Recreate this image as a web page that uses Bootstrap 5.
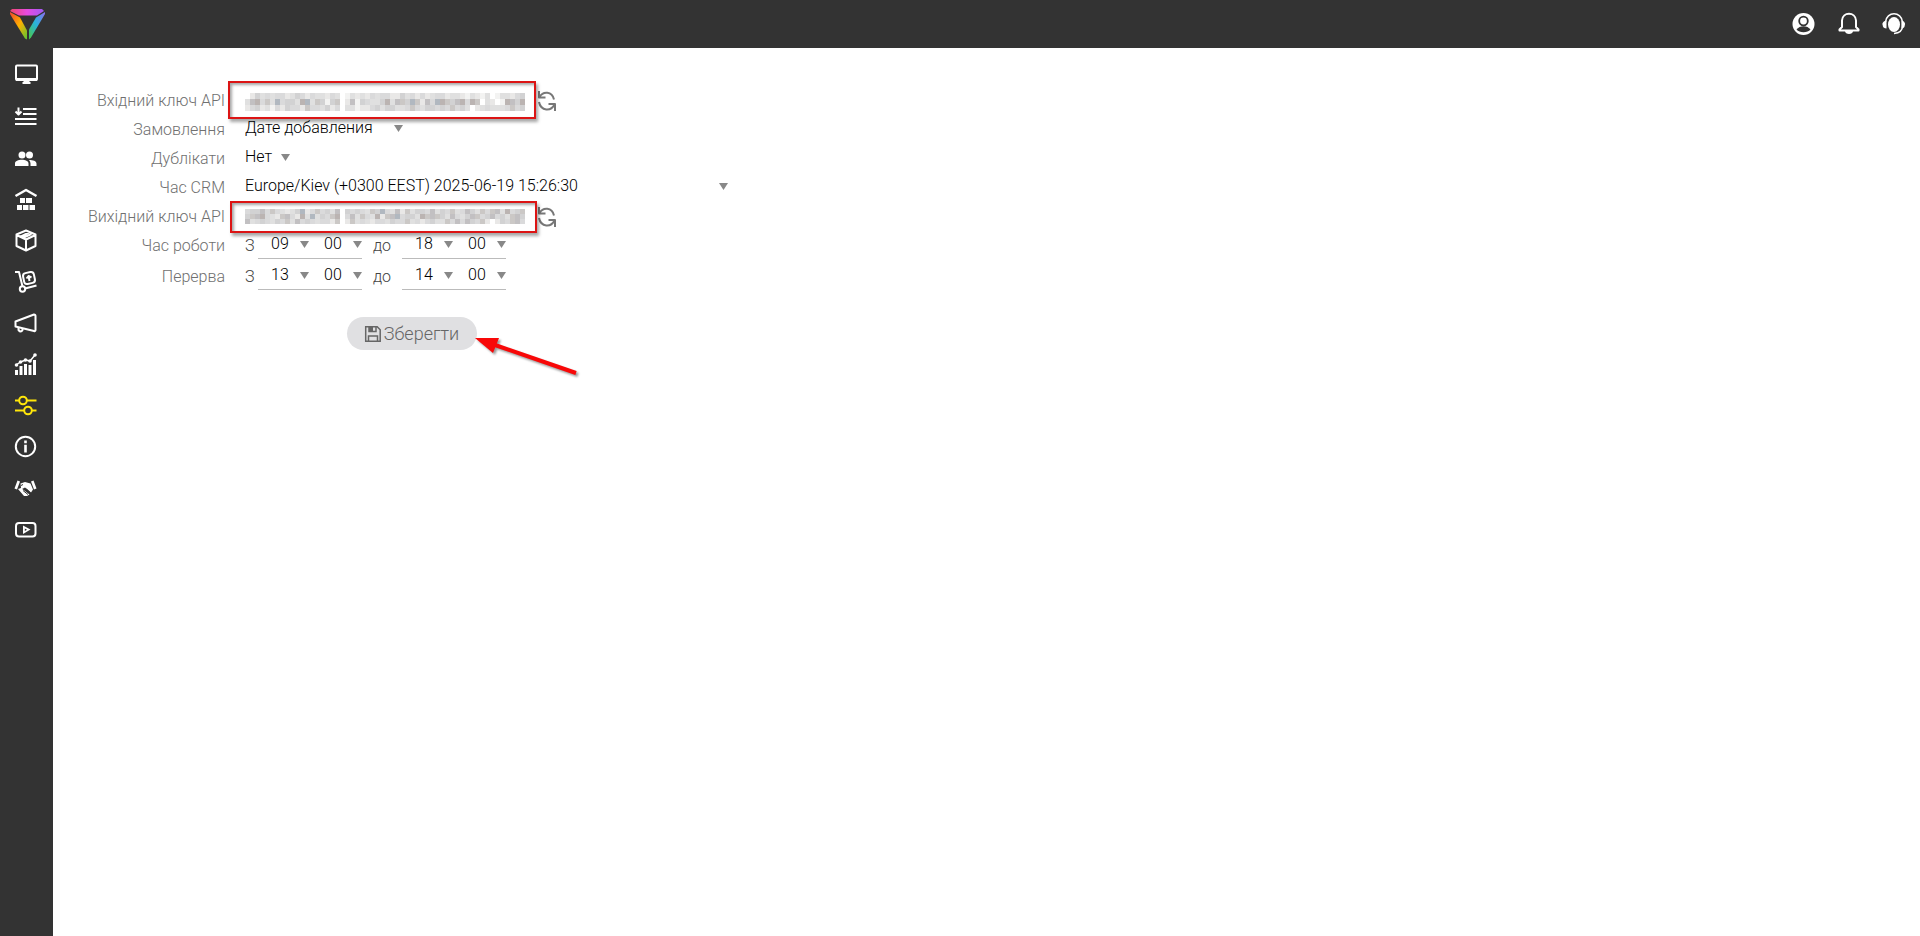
<!DOCTYPE html>
<html lang="uk">
<head>
<meta charset="utf-8">
<meta name="viewport" content="width=device-width, initial-scale=1">
<title>CRM</title>
<link href="https://cdn.jsdelivr.net/npm/bootstrap@5.3.0/dist/css/bootstrap.min.css" rel="stylesheet">
<style>
  body { font-family: Roboto, "Liberation Sans", sans-serif; font-weight: 300; font-size: 16px; line-height: 24px; color: #000; background: #fff; }
  svg { display: block; overflow: visible; }
  .topbar { background: #333; height: 48px; padding: 0 14px 0 8px; }
  .tools { gap: 21px; }
  .side { background: #333; width: 53px; flex: none; padding-top: 6px; }
  .side a { height: 41px; padding-right: 1px; color: #fff; }
  .side li:nth-child(3n+2) a { height: 42px; }
  .side a.active { color: #ffe60a; }
  .tool { color: #fff; }
  .ln { fill: none; stroke: currentColor; stroke-width: 2; stroke-linejoin: round; }
  .fl { fill: currentColor; }
  .settings { padding-top: 38px; }
  .line { height: 29px; gap: 20px; }
  .line > .title { width: 172px; flex: none; text-align: right; color: #707070; }
  .pick { appearance: none; border: 0; border-radius: 0; padding: 0 0 4px; color: #000; font-weight: 300; line-height: 24px; height: 28px;
    background: transparent url("data:image/svg+xml,%3Csvg xmlns='http://www.w3.org/2000/svg' width='9' height='7'%3E%3Cpath d='M0 0h9L4.5 7z' fill='%23888'/%3E%3C/svg%3E") no-repeat right 2px top 9px; }
  .pick-order { width: 160px; }
  .pick-dup { width: 47px; }
  .pick-zone { width: 485px; }
  .hours { border-bottom: 1px solid #bbb; }
  .hours .pick { width: 53px; padding-left: 13px; height: 26px; padding-bottom: 2px; }
  .hours .pick + .pick { width: 51px; background-position: right 0 top 9px; }
  .pause { margin-top: 2px; }
  .word { color: #444; }
  .from { width: 13px; }
  .till { width: 40px; text-align: center; }
  .keybox { width: 293px; }
  .keybox input { width: 100%; border: 0; background: transparent; outline: 0; height: 24px; padding: 0; }
  .cover { position: absolute; left: 0; top: 4px; }
  .mark-red { position: absolute; left: -17px; top: -8px; width: 308px; height: 38px; border: 2px solid #dc1414; box-shadow: 2px 3px 3px rgba(0,0,0,.35), inset 2px 2px 3px rgba(0,0,0,.35); }
  .mark-red.slim { left: -15px; top: -4px; width: 307px; height: 32px; }
  .renew { border: 0; background: none; padding: 0; color: #777; margin-left: -20px; }
  .save { width: 130px; height: 33px; margin: 26px 0 0 294px; border: 0; border-radius: 17px; background: #e0e0e2; color: #666; font-size: 18px; font-weight: 300; gap: 3px; }
  .pointer { position: absolute; left: 128px; top: 18px; filter: drop-shadow(2px 2px 1px rgba(0,0,0,.4)); }
</style>
</head>
<body class="d-flex flex-column min-vh-100">
<header class="topbar d-flex align-items-center justify-content-between">
  <a href="#" aria-label="CRM">
    <svg width="36" height="36" viewBox="0 0 36 36">
      <defs>
        <linearGradient id="ga"><stop offset="0" stop-color="#f0466e"/><stop offset=".5" stop-color="#e84be0"/><stop offset="1" stop-color="#a05af5"/></linearGradient>
        <linearGradient id="gb" x2="1" y2="1"><stop offset="0" stop-color="#f0442c"/><stop offset=".5" stop-color="#ffb000"/><stop offset="1" stop-color="#58c832"/></linearGradient>
        <linearGradient id="gc" x1="1" x2="0" y2="1"><stop offset="0" stop-color="#8c6cf0"/><stop offset=".5" stop-color="#28b4dc"/><stop offset="1" stop-color="#4cc840"/></linearGradient>
      </defs>
      <path d="M4 3h30l2 2-7 4.500H11L2 5z" fill="url(#ga)"/>
      <path d="M2 6l10 5.500 7 13v9l-2-1L2 8z" fill="url(#gb)"/>
      <path d="M37 6l-9 5.500-7 12v10l2-2L37 8z" fill="url(#gc)"/>
    </svg>
  </a>
  <nav class="tools d-flex">
    <a class="tool" href="#" aria-label="Профіль"><svg width="24" height="24" viewBox="0 0 24 24"><circle class="fl" cx="11.500" cy="12" r="11"/><circle cx="11.500" cy="9" r="4.300" fill="none" stroke="#333" stroke-width="1.800"/><path d="M4.500 17.500c3-4.500 11-4.500 14 0-3 3.500-11 3.500-14 0z" fill="#333"/></svg></a>
    <a class="tool" href="#" aria-label="Сповіщення"><svg width="24" height="24" viewBox="0 0 24 24"><path class="ln" d="M2.500 18.500v-1l2.500-2.500V8.500C5.500-.5 18.500-.5 19 8.500V15l2.500 2.500v1z"/><path class="fl" d="M8 19h8c0 4-8 4-8 0z"/></svg></a>
    <a class="tool" href="#" aria-label="Підтримка"><svg width="24" height="24" viewBox="0 0 24 24"><ellipse class="fl" cx="12" cy="12.500" rx="6" ry="7.500"/><path d="M3.500 10C4.500-1 19.500-1 20.500 10v4c0 4-3 7-8.500 7.500" class="ln" style="stroke-width:1.500px"/><path class="fl" d="M4.500 8.500v8C0 16 1 13 .5 12.500S1 9 4.500 8.500zM19.500 8.500v8c4-.500 3-3.500 3.500-4s-.5-3.500-3.500-4z"/></svg></a>
  </nav>
</header>
<div class="d-flex flex-grow-1">
  <nav class="side">
    <ul class="list-unstyled m-0">
      <li><a class="d-flex align-items-center justify-content-center" href="#" aria-label="Робочий стіл"><svg width="24" height="24" viewBox="0 0 24 24"><rect class="ln" x="2" y="2.500" width="21" height="14.500" rx="1"/><path class="fl" d="M2 15h21v3H2zM9.500 17h6v2h1v2h-8v-2h1z"/></svg></a></li>
      <li><a class="d-flex align-items-center justify-content-center" href="#" aria-label="Замовлення"><svg width="24" height="24" viewBox="0 0 24 24"><path class="ln" d="M9 5h13.500M9 10h13.500M1 15h21.500M1 20h21.500M4.500 3.500v6M1.500 7.500l3 3 3-3"/></svg></a></li>
      <li><a class="d-flex align-items-center justify-content-center" href="#" aria-label="Клієнти"><svg width="24" height="24" viewBox="0 0 24 24"><circle class="fl" cx="8" cy="9" r="3.500"/><circle class="fl" cx="15.500" cy="9" r="3.500"/><path class="fl" d="M1 20v-2.500c0-5 13.500-5 13.500 0V20zM15 14c4 0 7.500 1 7.500 3.500V20H16.500v-2.500q0-2-1.500-3.500z"/></svg></a></li>
      <li><a class="d-flex align-items-center justify-content-center" href="#" aria-label="Склад"><svg width="24" height="24" viewBox="0 0 24 24"><path class="ln" d="M1.500 9L12 3l10.500 6" style="stroke-width:2.500px"/><path class="fl" d="M6 11h5v5H6zM12 11h6v5h-6zM3 18h5v5H3zM9 18h5.500v5H9zM15.500 18H21v5h-5.500z"/></svg></a></li>
      <li><a class="d-flex align-items-center justify-content-center" href="#" aria-label="Товари"><svg width="24" height="24" viewBox="0 0 24 24"><path class="ln" d="M12 2.500l9.500 4V18L12 22.500 2.500 18V6.500zM2.500 7l9.500 4.500L21.500 7M12 11.500v11M6 9l9-4.500M8.500 10l9-4"/></svg></a></li>
      <li><a class="d-flex align-items-center justify-content-center" href="#" aria-label="Доставка"><svg width="24" height="24" viewBox="0 0 24 24"><path class="ln" d="M1 2h4l3.500 14.500M11 18.500l11.500-3"/><circle class="ln" cx="8.500" cy="19" r="2.700"/><rect class="ln" x="9.500" y="2.500" width="11" height="11" rx="3" transform="rotate(-12 15 8)"/><path class="ln" d="M15.500 11l-.8-4M12.500 8.500l2-2.500 3 1.500"/></svg></a></li>
      <li><a class="d-flex align-items-center justify-content-center" href="#" aria-label="Маркетинг"><svg width="24" height="24" viewBox="0 0 24 24"><path class="ln" d="M1.500 10.500L20 3.500q1.500 0 1.500 1.500v14q0 1.500-1.500 1L1.500 15.500z"/><path class="ln" d="M4.500 16v3q2.500 3 4 0v-2"/></svg></a></li>
      <li><a class="d-flex align-items-center justify-content-center" href="#" aria-label="Статистика"><svg width="24" height="24" viewBox="0 0 24 24"><path class="fl" d="M1 18h3v5H1zM5.500 14h3v9h-3zM10 12h3v11h-3zM14.500 13h3v10h-3zM19 8h3v15h-3z"/><path class="ln" d="M2 13l4.500-3 5-2 4.500 1 5-6" style="stroke-width:1.500px"/><circle class="fl" cx="2.500" cy="13" r="1.800"/><circle class="fl" cx="6.500" cy="10" r="1.800"/><circle class="fl" cx="11.500" cy="8" r="1.800"/><circle class="fl" cx="16" cy="9" r="1.800"/><circle class="fl" cx="21" cy="3" r="1.800"/></svg></a></li>
      <li><a class="active d-flex align-items-center justify-content-center" href="#" aria-label="Налаштування" aria-current="page"><svg width="24" height="24" viewBox="0 0 24 24"><path class="ln" d="M1 6.500h4M13 6.500h9.500M1 16.500h9M18 16.500h4.500"/><circle class="ln" cx="9" cy="6.500" r="3.800"/><circle class="ln" cx="14" cy="16.500" r="3.800"/></svg></a></li>
      <li><a class="d-flex align-items-center justify-content-center" href="#" aria-label="Інформація"><svg width="24" height="24" viewBox="0 0 24 24"><circle class="ln" cx="11.500" cy="11.500" r="9.700"/><path class="fl" d="M10.200 5.500h2.600v2.800h-2.600zM10.200 9.800h2.600v7.700h-2.600z"/></svg></a></li>
      <li><a class="d-flex align-items-center justify-content-center" href="#" aria-label="Партнери"><svg width="24" height="24" viewBox="0 0 24 24"><path class="fl" d="M3.500 4.500l2.500 1-3 8-2.500-1zM19.500 4.500L17 5.500l3 8 2.500-1zM6.500 7.500L11 6l5.500 1.500 2.500 6-2 3-6-5-3 1.500-1-1zM4 13l3-1 8.500 6.500L13 20H10z"/><path d="M9 14.500l5 4M12 12.500l4 4M7 9.500l2-1" stroke="#333"/></svg></a></li>
      <li><a class="d-flex align-items-center justify-content-center" href="#" aria-label="Відео"><svg width="24" height="24" viewBox="0 0 24 24"><rect class="ln" x="2" y="5" width="19.500" height="13.500" rx="3"/><path class="fl" d="M9 7.500l7.500 4L9 16z"/><path d="M10.800 10.500l2.200 1.200-2.200 1.300z" fill="#333"/></svg></a></li>
    </ul>
  </nav>
  <main class="settings flex-grow-1">
    <form>
      <div class="line d-flex align-items-center">
        <label class="title" for="keyIn">Вхідний ключ API</label>
        <div class="keybox position-relative"><input id="keyIn" type="password" readonly><svg class="cover" width="280" height="17" data-mosaic="in" aria-hidden="true"></svg><span class="mark-red"></span></div>
        <button class="renew" type="button" aria-label="Оновити"><svg width="18" height="20" viewBox="0 0 18 20"><path class="ln" d="M1 0v6.500h6.500M1.500 6C5 0 14 0 16 8.500M17 20v-7h-6.500M16.500 13.500C13 20.500 3 20.500 1 11"/></svg></button>
      </div>
      <div class="line d-flex align-items-center">
        <label class="title" for="order">Замовлення</label>
        <select id="order" class="pick pick-order"><option>Дате добавления</option></select>
      </div>
      <div class="line d-flex align-items-center">
        <label class="title" for="dup">Дублікати</label>
        <select id="dup" class="pick pick-dup"><option>Нет</option></select>
      </div>
      <div class="line d-flex align-items-center">
        <label class="title" for="zone">Час CRM</label>
        <select id="zone" class="pick pick-zone"><option>Europe/Kiev (+0300 EEST) 2025-06-19 15:26:30</option></select>
      </div>
      <div class="line d-flex align-items-center">
        <label class="title" for="keyOut">Вихідний ключ API</label>
        <div class="keybox position-relative"><input id="keyOut" type="password" readonly><svg class="cover" width="280" height="15" data-mosaic="out" aria-hidden="true"></svg><span class="mark-red slim"></span></div>
        <button class="renew" type="button" aria-label="Оновити"><svg width="18" height="20" viewBox="0 0 18 20"><path class="ln" d="M1 0v6.500h6.500M1.500 6C5 0 14 0 16 8.500M17 20v-7h-6.500M16.500 13.500C13 20.500 3 20.500 1 11"/></svg></button>
      </div>
      <div class="line d-flex align-items-center">
        <label class="title" for="w1">Час роботи</label>
        <div class="d-flex align-items-center">
          <span class="word from">З</span>
          <div class="hours d-flex"><select id="w1" class="pick"><option>09</option></select><select class="pick" aria-label="Хвилини"><option>00</option></select></div>
          <span class="word till">до</span>
          <div class="hours d-flex"><select class="pick" aria-label="Години"><option>18</option></select><select class="pick" aria-label="Хвилини"><option>00</option></select></div>
        </div>
      </div>
      <div class="line pause d-flex align-items-center">
        <label class="title" for="b1">Перерва</label>
        <div class="d-flex align-items-center">
          <span class="word from">З</span>
          <div class="hours d-flex"><select id="b1" class="pick"><option>13</option></select><select class="pick" aria-label="Хвилини"><option>00</option></select></div>
          <span class="word till">до</span>
          <div class="hours d-flex"><select class="pick" aria-label="Години"><option>14</option></select><select class="pick" aria-label="Хвилини"><option>00</option></select></div>
        </div>
      </div>
      <button class="save position-relative d-flex align-items-center justify-content-center" type="submit">
        <svg width="16" height="16" viewBox="0 0 16 16"><path d="M.7.700h11.500l3 3v11.500H.7zM3.500 15v-5h9v5M4 1v4.500h7V1" fill="none" stroke="currentColor" stroke-width="1.500"/><path class="fl" d="M4 1h4v4H4z"/></svg>
        Зберегти
        <svg class="pointer" width="104" height="42" viewBox="0 0 104 42" aria-hidden="true"><path d="M20 10L101 38" stroke="#f80808" stroke-width="4"/><path d="M0 3h24l-6 15z" fill="#f80808"/></svg>
      </button>
    </form>
  </main>
</div>
<script src="https://cdn.jsdelivr.net/npm/bootstrap@5.3.0/dist/js/bootstrap.bundle.min.js"></script>
<script>
  // Masked key tiles: each digit picks one shade, one string per tile row.
  const shades = ['#fff', '#f3f3f2', '#e9e8e7', '#e0e0e0', '#dadadb', '#d2d2d3', '#cbc8c6', '#c2c0c2', '#bbb4b2', '#b1b8c0'];
  const masks = {
    in: ['02534344235424332430132324344225342423442332132130133245', '37846394553893651560271543358376596274986578486032018758', '24523142544264435240331224535533464355454645302343334645'],
    out: ['45574643235924645370545436594372635547354634753646738456', '56784326742839354680473643826794553867653743576457453675', '73454354637454344260263432443544634245336474754620254674']
  };
  document.querySelectorAll('[data-mosaic]').forEach(svg => {
    const h = Math.ceil(svg.getAttribute('height') / 3);
    masks[svg.dataset.mosaic].forEach((row, y) => [...row].forEach((d, x) => {
      const r = document.createElementNS('http://www.w3.org/2000/svg', 'rect');
      r.setAttribute('x', x * 5); r.setAttribute('y', y * h);
      r.setAttribute('width', 5); r.setAttribute('height', h);
      r.setAttribute('fill', shades[d]);
      svg.appendChild(r);
    }));
  });
</script>
</body>
</html>
